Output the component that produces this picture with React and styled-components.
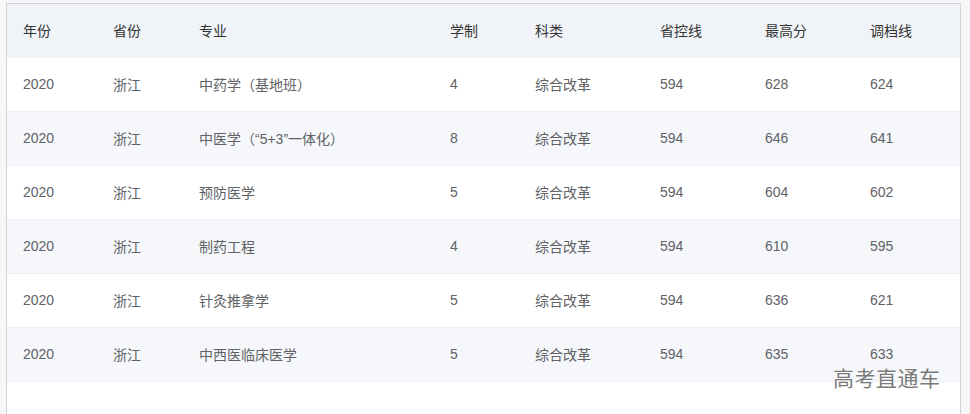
import React from "react";
import styled, { createGlobalStyle } from "styled-components";

const GlobalStyle = createGlobalStyle`
  html, body {
    margin: 0;
    padding: 0;
    background: #f7f7f7;
    font-family: "Liberation Sans", Arial, "Noto Sans CJK SC", sans-serif;
  }
`;

const columns = [
  { key: "year", title: "年份", width: 90 },
  { key: "province", title: "省份", width: 86 },
  { key: "major", title: "专业", width: 251 },
  { key: "years", title: "学制", width: 85 },
  { key: "type", title: "科类", width: 125 },
  { key: "control", title: "省控线", width: 105 },
  { key: "max", title: "最高分", width: 105 },
  { key: "line", title: "调档线", width: 106 },
];

const rows = [
  ["2020", "浙江", "中药学（基地班）", "4", "综合改革", "594", "628", "624"],
  ["2020", "浙江", "中医学（“5+3”一体化）", "8", "综合改革", "594", "646", "641"],
  ["2020", "浙江", "预防医学", "5", "综合改革", "594", "604", "602"],
  ["2020", "浙江", "制药工程", "4", "综合改革", "594", "610", "595"],
  ["2020", "浙江", "针灸推拿学", "5", "综合改革", "594", "636", "621"],
  ["2020", "浙江", "中西医临床医学", "5", "综合改革", "594", "635", "633"],
];

const App = () => {
  return (
    <Page>
      <GlobalStyle />
      <Panel>
        <Table>
          <colgroup>
            {columns.map((c) => (
              <col key={c.key} style={{ width: c.width }} />
            ))}
          </colgroup>
          <thead>
            <tr>
              {columns.map((c) => (
                <HeadCell key={c.key}>{c.title}</HeadCell>
              ))}
            </tr>
          </thead>
          <tbody>
            {rows.map((r, i) => (
              <Row key={i} $striped={i % 2 === 1}>
                {r.map((v, j) => (
                  <Cell key={j}>{v}</Cell>
                ))}
              </Row>
            ))}
          </tbody>
        </Table>
        <Watermark>高考直通车</Watermark>
      </Panel>
    </Page>
  );
};

const Page = styled.div`
  width: 970px;
  height: 414px;
  padding: 3px 9px 0 6px;
  box-sizing: border-box;
  overflow: hidden;
`;

const Panel = styled.div`
  position: relative;
  height: 100%;
  background: #ffffff;
  border: 1px solid #d3d3d3;
  border-bottom: none;
  box-sizing: border-box;
`;

const Table = styled.table`
  width: 953px;
  border-collapse: collapse;
  table-layout: fixed;
  font-size: 14px;
`;

const HeadCell = styled.th`
  height: 53px;
  padding: 0 16px;
  text-align: left;
  font-weight: normal;
  color: #333333;
  background: #f0f3f7;
  border-bottom: 1px solid #ebeef5;
  box-sizing: border-box;
`;

const Row = styled.tr`
  background: ${(p) => (p.$striped ? "#f5f7fa" : "#ffffff")};
`;

const Cell = styled.td`
  height: 54px;
  padding: 0 16px;
  color: #606266;
  border-bottom: 1px solid #ebeef5;
  box-sizing: border-box;
  white-space: nowrap;
`;

const Watermark = styled.div`
  position: absolute;
  left: 826px;
  top: 358px;
  font-size: 21px;
  letter-spacing: 0.5px;
  color: #7a7a7a;
  font-family: "Noto Sans CJK SC", sans-serif;
  text-shadow: 0 0 2px #ffffff, 0 0 2px #ffffff;
`;

export default App;
